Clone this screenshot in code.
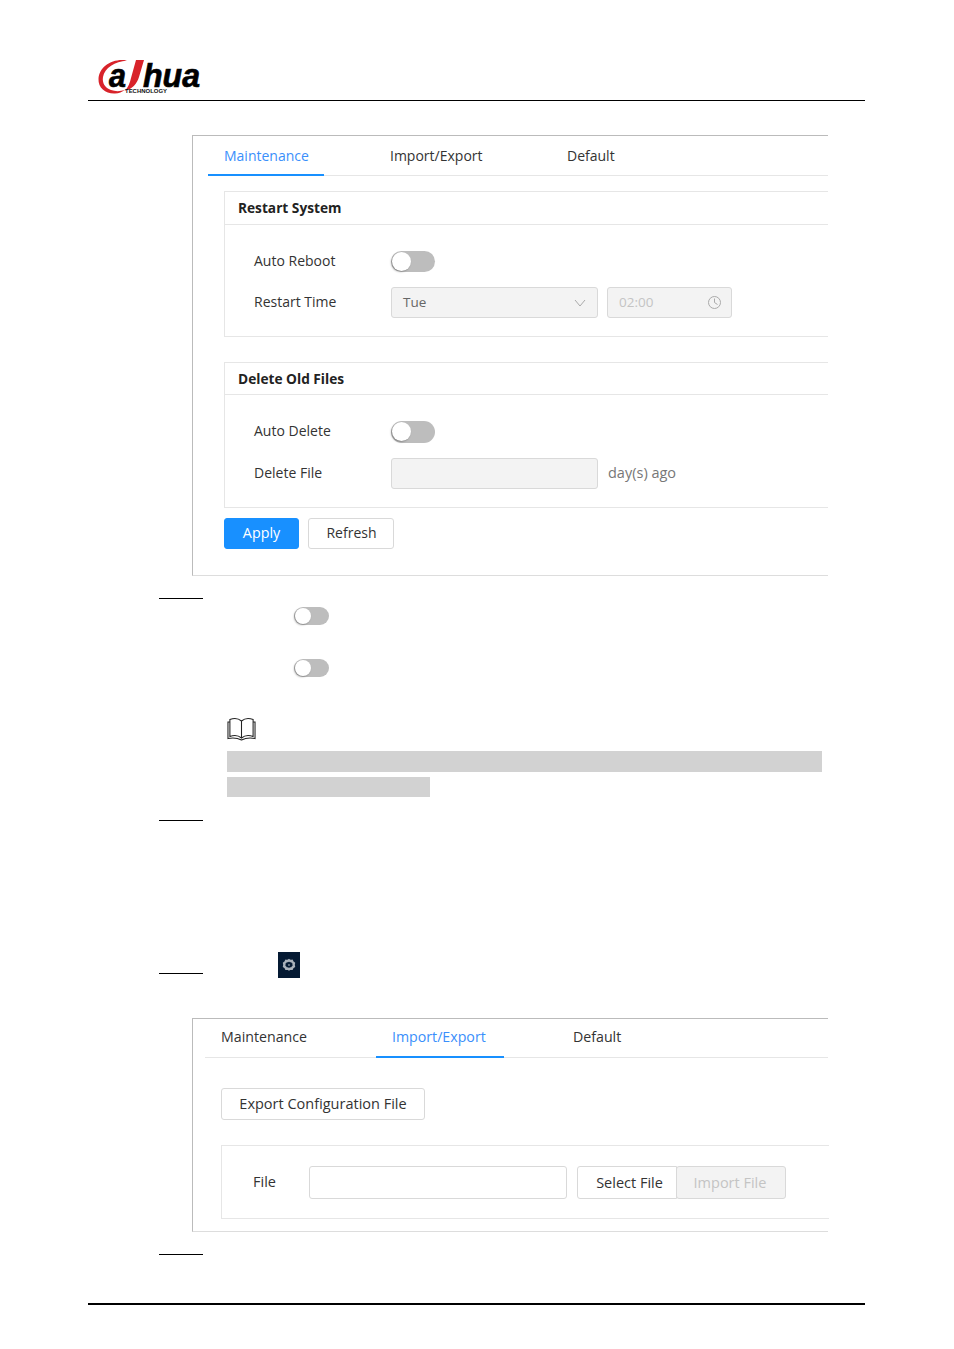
<script>
</script>

<div class="page">
  <header class="head">
    <svg class="logo" width="104" height="50" viewBox="0 0 104 50" aria-label="Dahua Technology">
      <path d="M29 10.500C14 8 1 17 .5 29 0 38 8 44 17 43.500 21 43.300 24 42 27 40 22 41.500 17 41.500 13 40 7 38 4 33 5 27 6.500 18 17 11.500 29 10.500z" fill="#d8232a"/>
      <path d="M38 10H46L41 27C39 34 34 39 27 41 30 37 32 33 33 28z" fill="#d8232a"/>
      <text x="11" y="37" class="lg" textLength="17" lengthAdjust="spacingAndGlyphs">a</text>
      <text x="45" y="37" class="lg" textLength="57" lengthAdjust="spacingAndGlyphs">hua</text>
      <text x="27" y="43" class="lgs" textLength="42" lengthAdjust="spacingAndGlyphs">TECHNOLOGY</text>
    </svg>
  </header>

  <section class="panel first">
    <nav class="tabs t1">
      <span class="tab active">Maintenance</span>
      <span class="tab">Import/Export</span>
      <span class="tab">Default</span>
    </nav>

    <div class="card c1">
      <h3>Restart System</h3>
      <div class="body">
        <div class="row r-toggle">
          <span class="lab">Auto Reboot</span>
          <span class="sw"><i></i></span>
        </div>
        <div class="row r-field">
          <span class="lab">Restart Time</span>
          <span class="field sel">Tue
            <svg width="12" height="8" viewBox="0 0 12 8"><path d="M1 1l5 6 5-6" fill="none" stroke="#aaa" stroke-width="1"/></svg>
          </span>
          <span class="field time">02:00
            <svg width="15" height="15" viewBox="0 0 15 15"><circle cx="7.500" cy="7.500" r="6" fill="none" stroke="#aaa"/><path d="M7.500 3.500v4l3 2" fill="none" stroke="#aaa"/></svg>
          </span>
        </div>
      </div>
    </div>

    <div class="card c2">
      <h3>Delete Old Files</h3>
      <div class="body">
        <div class="row r-toggle">
          <span class="lab up">Auto Delete</span>
          <span class="sw tall"><i></i></span>
        </div>
        <div class="row r-field2">
          <span class="lab">Delete File</span>
          <span class="field sel"></span>
          <span class="unit">day(s) ago</span>
        </div>
      </div>
    </div>

    <div class="actions">
      <button class="btn primary">Apply</button>
      <button class="btn refresh">Refresh</button>
    </div>
  </section>

  <div class="step s1"><b></b></div>
  <div class="mini m1"><span class="sw small"><i></i></span></div>
  <div class="mini m2"><span class="sw small"><i></i></span></div>

  <svg class="book" width="29" height="24" viewBox="0 0 30 24" preserveAspectRatio="none">
    <path d="M15 4C12 1.500 7 1 3 2.500V19.500C7 18 12 18.500 15 21 18 18.500 23 18 27 19.500V2.500C23 1 18 1.500 15 4zM15 4V21" fill="#fff" stroke="#222" stroke-width="1.100"/>
    <path d="M3 5H1V21.500C6 20.500 11 21 15 23 19 21 24 20.500 29 21.500V5H27" fill="none" stroke="#222" stroke-width="1.100"/>
  </svg>
  <div class="redact wide"></div>
  <div class="redact narrow"></div>

  <div class="step s2"><b></b></div>

  <div class="step s3">
    <b></b>
    <span class="gear">
      <svg width="14" height="14" viewBox="0 0 14 14">
        <path d="M7 2.200l1.300.9 1.600-.2.700 1.400 1.300.9-.3 1.600.3 1.600-1.300.9-.7 1.400-1.600-.2-1.300.9-1.300-.9-1.600.2-.7-1.400-1.300-.9.3-1.600-.3-1.600 1.300-.9.7-1.400 1.600.2z" fill="none" stroke="#aab2bb" stroke-width="2.400"/>
        <circle cx="7" cy="7" r=".9" fill="#7f8b99"/>
      </svg>
    </span>
  </div>

  <section class="panel second">
    <nav class="tabs t2">
      <span class="tab">Maintenance</span>
      <span class="tab active">Import/Export</span>
      <span class="tab">Default</span>
    </nav>
    <button class="btn export">Export Configuration File</button>
    <div class="card c3">
      <span class="lab">File</span>
      <span class="input"></span>
      <div class="group">
        <button class="btn select">Select File</button>
        <button class="btn import" disabled>Import File</button>
      </div>
    </div>
  </section>

  <div class="step s4"><b></b></div>

  <footer class="foot"></footer>
</div>

<style>
  :global(body) { margin: 0; background: #fff; }
  .page { width: 954px; height: 1349px; overflow: hidden; box-sizing: border-box; padding-top: 50px;
    font-family: "Open Sans", "Noto Sans", sans-serif; font-size: 14px; color: #333; display: flex; flex-direction: column; }

  .head { margin: 0 89px 0 88px; height: 50px; border-bottom: 1px solid #000; padding-left: 10px; }
  .logo { display: block; }
  .lg { font: italic 700 33px "Liberation Sans", sans-serif; fill: #000; stroke: #000; stroke-width: .7px; }
  .lgs { font: 700 6px "Liberation Sans", sans-serif; fill: #111; }

  .panel { margin-left: 192px; width: 636px; box-sizing: border-box; border-left: 1px solid #bbb; border-top: 1px solid #bbb; border-bottom: 1px solid #ddd; }
  .first { margin-top: 34px; height: 441px; }
  .second { height: 214px; margin-top: 44px; }

  .tabs { display: flex; height: 40px; box-sizing: border-box; border-bottom: 1px solid #e6e6e6; line-height: 40px; }
  .tab { box-sizing: border-box; height: 40px; padding: 0 16px; white-space: nowrap; }
  .tab.active { color: #3a8ffb; border-bottom: 2px solid #1890ff; }
  .t1 { margin-left: 15px; }
  .t1 .tab:nth-child(1) { width: 116px; }
  .t1 .tab:nth-child(2) { margin-left: 50px; width: 177px; }
  .t2 { margin-left: 12px; height: 39px; line-height: 35px; font-size: 14.200px; }
  .t2 .tab { height: 39px; }
  .t2 .tab:nth-child(1) { width: 171px; }
  .t2 .tab:nth-child(2) { width: 128px; }
  .t2 .tab:nth-child(3) { margin-left: 53px; }

  .card { margin-left: 31px; box-sizing: border-box; border: 1px solid #e6e6e6; border-right: 0; }
  .c1 { margin-top: 15px; height: 146px; }
  .c2 { margin-top: 25px; height: 146px; }
  h3 { margin: 0; height: 32px; box-sizing: border-box; padding-left: 13px; font-size: 13.700px; line-height: 32px; font-weight: 700; color: #222; border-bottom: 1px solid #e6e6e6; }
  .c1 h3 { height: 33px; }
  .body { padding-left: 29px; }
  .row { display: flex; align-items: center; }
  .lab { white-space: nowrap; }
  .row .lab { width: 137px; padding-bottom: 2px; }
  .row .lab.up { padding-bottom: 4px; }
  .r-toggle { margin-top: 26px; height: 21px; }
  .c2 .r-toggle { height: 22px; }
  .r-field { margin-top: 15px; height: 31px; }
  .r-field2 { margin-top: 15px; height: 31px; }

  .sw { display: block; position: relative; width: 44px; height: 21px; border-radius: 11px; background: #bdbdbd; flex: none; }
  .sw.tall { height: 22px; }
  .sw i { position: absolute; left: 1px; top: 1px; width: 19px; height: 19px; border-radius: 50%; background: #fff; box-shadow: -1px 1px 2px rgba(0,0,0,.3); }
  .sw.small { width: 35px; height: 18px; border-radius: 9px; }
  .sw.small i { width: 16px; height: 16px; }

  .field { display: flex; align-items: center; justify-content: space-between; box-sizing: border-box; height: 31px; border: 1px solid #d9d9d9; border-radius: 3px; background: #f3f3f3; color: #666; padding: 0 11px 2px; font-size: 13.500px; }
  .field svg { margin-top: 2px; }
  .sel { width: 207px; }
  .time { width: 125px; margin-left: 9px; color: #c4c4c4; padding-right: 9px; }
  .unit { margin-left: 10px; color: #777; font-size: 14.500px; padding-bottom: 2px; }

  .actions { display: flex; margin: 10px 0 0 31px; gap: 9px; }
  .btn { box-sizing: border-box; font: inherit; height: 31px; border: 1px solid #d9d9d9; border-radius: 3px; background: #fff; color: #333; padding: 0 0 2px; }
  .primary { width: 75px; background: #1890ff; border-color: #1890ff; color: #fff; font-size: 14.300px; }
  .refresh { width: 86px; padding-left: 1px; }

  .step { margin-left: 159px; height: 1px; position: relative; }
  .step b { display: block; width: 44px; height: 1px; background: #000; }
  .s1 { margin-top: 22px; }
  .mini { margin-left: 294px; }
  .m1 { margin-top: 8px; }
  .m2 { margin-top: 34px; }
  .book { display: block; margin: 40px 0 0 227px; }
  .redact { background: #d2d2d2; margin-left: 227px; }
  .wide { width: 595px; height: 21px; margin-top: 10px; }
  .narrow { width: 203px; height: 20px; margin-top: 5px; }
  .s2 { margin-top: 23px; }
  .s3 { margin-top: 152px; }
  .gear { position: absolute; left: 119px; top: -21px; width: 22px; height: 26px; background: #051a33; display: flex; align-items: center; justify-content: center; }

  .export { display: block; width: 204px; height: 32px; margin: 30px 0 0 28px; font-size: 14.500px; }
  .c3 { margin: 25px 0 0 28px; height: 74px; width: 608px; display: flex; align-items: center; padding-left: 31px; }
  .c3 .lab { width: 56px; font-size: 14.500px; padding-bottom: 2px; }
  .input { display: block; width: 258px; height: 33px; box-sizing: border-box; border: 1px solid #d9d9d9; border-radius: 3px; }
  .group { display: flex; margin-left: 10px; font-size: 14.500px; }
  .select { width: 100px; height: 33px; border-radius: 3px 0 0 3px; padding: 0 0 0 5px; }
  .import { width: 110px; height: 33px; margin-left: -1px; background: #f3f3f3; color: #c4c4c4; border-radius: 3px; padding: 0 2px 0 0; }
  .s4 { margin-top: 22px; }

  .foot { margin: 48px 89px 0 88px; height: 2px; background: #000; }
</style>
